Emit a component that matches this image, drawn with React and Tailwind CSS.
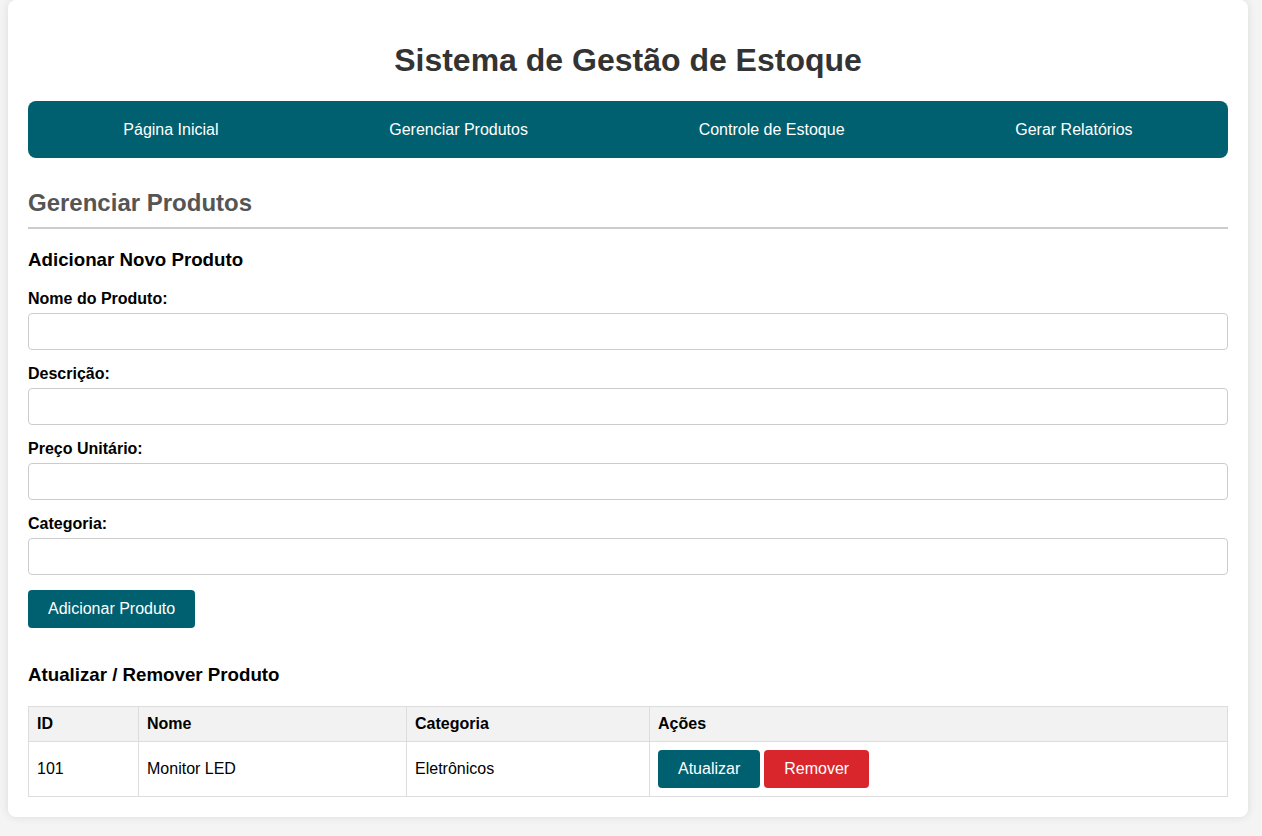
const navLinks = ['Página Inicial', 'Gerenciar Produtos', 'Controle de Estoque', 'Gerar Relatórios']
const fields = ['Nome do Produto:', 'Descrição:', 'Preço Unitário:', 'Categoria:']

const products = [{ id: 101, nome: 'Monitor LED', categoria: 'Eletrônicos' }]

export default function App() {
  return (
    <div className="min-h-screen bg-[#f4f4f4] font-['Liberation_Sans',Arial,sans-serif] text-[#333] pb-[19px]">
      <div className="ml-2 w-[1240px] bg-white rounded-lg shadow-[0_0_10px_rgba(0,0,0,0.1)] p-5">
        <header>
          <h1 className="text-center text-[32px] font-bold leading-[37px] mt-[22px] mb-[22px] text-[#333]">
            Sistema de Gestão de Estoque
          </h1>
          <nav className="bg-[#006070] rounded-lg px-[10px] py-[10px] flex justify-around">
            {navLinks.map((l) => (
              <a key={l} href="#" className="text-white text-base leading-[17px] px-[15px] py-[10px] block">
                {l}
              </a>
            ))}
          </nav>
        </header>

        <section>
          <h2 className="text-2xl font-bold leading-[28px] text-[#555] mt-[31px] pb-[10px] border-b-2 border-[#ccc]">
            Gerenciar Produtos
          </h2>

          <h3 className="text-[18.72px] font-bold leading-[22px] text-black mt-5 mb-[19px]">
            Adicionar Novo Produto
          </h3>
          <form onSubmit={(e) => e.preventDefault()} className="mb-4">
            {fields.map((f) => (
              <div key={f} className="mb-[15px]">
                <label className="block font-bold text-base leading-[18px] text-black mb-[5px]">{f}</label>
                <input
                  type="text"
                  className="block w-full h-[37px] border border-[#ccc] rounded px-2 text-base bg-white"
                />
              </div>
            ))}
            <button
              type="submit"
              className="bg-[#006070] text-white text-base leading-[18px] px-5 py-[10px] rounded"
            >
              Adicionar Produto
            </button>
          </form>

          <h3 className="text-[18.72px] font-bold leading-[22px] text-black mt-[36px] mb-5">
            Atualizar / Remover Produto
          </h3>
          <table className="w-full border-collapse text-base text-black">
            <thead>
              <tr className="bg-[#f2f2f2]">
                <th className="w-[110px] border border-[#ddd] px-2 py-2 text-left font-bold leading-[18px]">ID</th>
                <th className="w-[268px] border border-[#ddd] px-2 py-2 text-left font-bold leading-[18px]">Nome</th>
                <th className="w-[243px] border border-[#ddd] px-2 py-2 text-left font-bold leading-[18px]">Categoria</th>
                <th className="border border-[#ddd] px-2 py-2 text-left font-bold leading-[18px]">Ações</th>
              </tr>
            </thead>
            <tbody>
              {products.map((p) => (
                <tr key={p.id}>
                  <td className="border border-[#ddd] px-2 py-2 leading-[18px]">{p.id}</td>
                  <td className="border border-[#ddd] px-2 py-2 leading-[18px]">{p.nome}</td>
                  <td className="border border-[#ddd] px-2 py-2 leading-[18px]">{p.categoria}</td>
                  <td className="border border-[#ddd] px-2 py-2">
                    <div className="flex gap-1">
                      <button className="bg-[#006070] text-white leading-[18px] px-5 py-[10px] rounded">Atualizar</button>
                      <button className="bg-[#d9262c] text-white leading-[18px] px-5 py-[10px] rounded">Remover</button>
                    </div>
                  </td>
                </tr>
              ))}
            </tbody>
          </table>
        </section>
      </div>
    </div>
  )
}
